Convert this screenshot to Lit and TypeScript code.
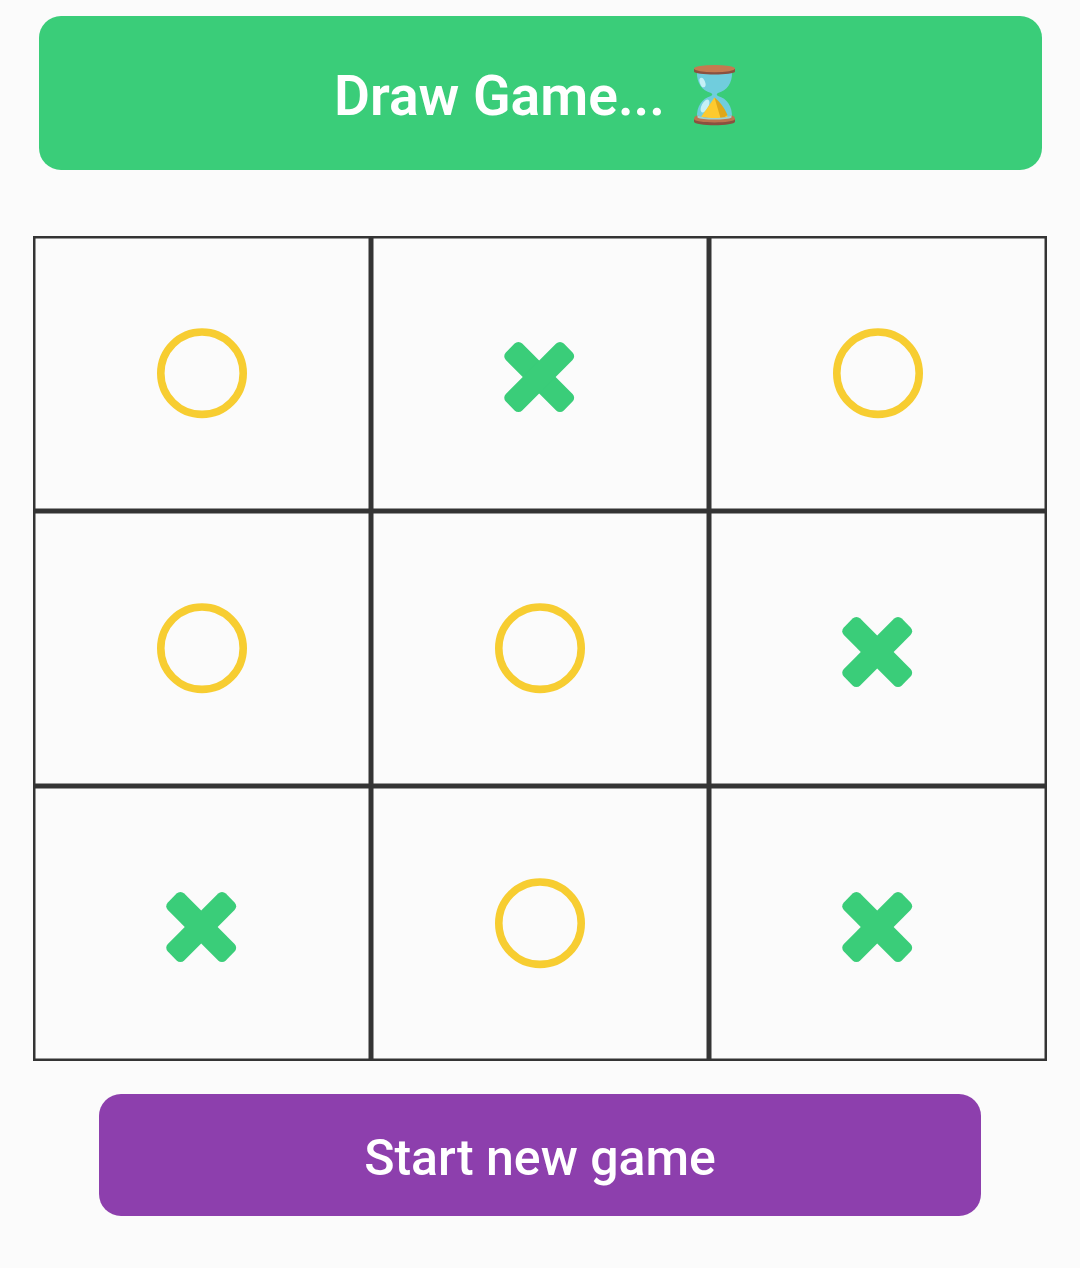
import { LitElement, html, svg, css } from "lit";
import { customElement, state } from "lit/decorators.js";

type Mark = "circle" | "cross";

const COLS = 3;
const CELL_W = 338;
const CELL_H = 275;
const EDGE = 2.5;

@customElement("app-root")
export class AppRoot extends LitElement {
  @state() private marks: Mark[] = [
    "circle", "cross", "circle",
    "circle", "circle", "cross",
    "cross", "circle", "cross",
  ];

  static styles = css`
    :host {
      display: flex;
      flex-direction: column;
      box-sizing: border-box;
      width: 1080px;
      height: 1268px;
      padding: 16px 33px 0;
      background: #fbfbfb;
      font-family: Roboto, "Liberation Sans", sans-serif;
      font-weight: 500;
      color: #fff;
      overflow: hidden;
    }
    .banner {
      display: flex;
      align-items: center;
      justify-content: center;
      box-sizing: border-box;
      height: 154px;
      margin: 0 5px 0 6px;
      padding: 5px 11px 0 0;
      border-radius: 22px;
      background: #3acd79;
      font-size: 55.2px;
      font-weight: 600;
      line-height: 64px;
      white-space: pre;
    }
    .glass {
      display: block;
      width: 43px;
      height: 62px;
      margin: 0 0 1px 28px;
    }
    .board {
      display: grid;
      grid-template-columns: repeat(3, 338px);
      grid-auto-rows: 275px;
      margin-top: 66px;
    }
    .cell {
      display: block;
      width: 338px;
      height: 275px;
    }
    .edge {
      fill: none;
      stroke: #343434;
    }
    .circle {
      fill: none;
      stroke: #f7cd31;
      stroke-width: 7.6;
    }
    .cross {
      fill: #3acd79;
    }
    .restart {
      height: 122px;
      margin: 33px 66px 0;
      padding: 6px 0 0;
      border: 0;
      border-radius: 22px;
      background: #8d3fad;
      color: inherit;
      font: inherit;
      font-size: 50px;
      line-height: 58px;
    }
  `;

  private renderMark(mark: Mark) {
    return mark === "circle"
      ? svg`<circle class="circle" cx="169" cy="137.2" r="41.2" />`
      : svg`<g class="cross" transform="translate(168.2 141)">
          <rect x="-41" y="-11.6" width="82" height="23.2" rx="5.4" transform="rotate(45)" />
          <rect x="-41" y="-11.6" width="82" height="23.2" rx="5.4" transform="rotate(-45)" />
        </g>`;
  }

  private renderCell(mark: Mark, index: number) {
    return html`<svg class="cell" viewBox="0 0 ${CELL_W} ${CELL_H}" aria-label="${mark} ${Math.floor(index / COLS) + 1}-${(index % COLS) + 1}">
      <rect class="edge" stroke-width=${EDGE} x=${EDGE / 2} y=${EDGE / 2}
        width=${CELL_W - EDGE} height=${CELL_H - EDGE} />
      ${this.renderMark(mark)}
    </svg>`;
  }

  render() {
    return html`
      <div class="banner">
        <span>Draw Game...</span>
        <svg class="glass" viewBox="0 0 43 62">
          <path d="M4 8H39C39.500 19 34 26.500 25 29Q22.500 30.500 25 32C34 34.500 39.500 42 39 54H4C3.500 42 9 34.500 18 32Q20.500 30.500 18 29C9 26.500 3.500 19 4 8Z" fill="#70cddd" />
          <ellipse cx="9.5" cy="18.5" rx="2.6" ry="5" transform="rotate(-20 9.500 18.500)" fill="#c5f0f6" />
          <ellipse cx="12" cy="42" rx="3.4" ry="7" transform="rotate(28 12 42)" fill="#c5f0f6" />
          <path d="M21.500 33.500L8 53Q22 56.500 35 53Z" fill="#fdca2f" />
          <path d="M21.500 33.500C27 38 31 43 34.500 51Q32 53.500 27.500 54Z" fill="#dfa719" />
          <path d="M1 5V7.500C1 11.500 42 11.500 42 7.500V5Z" fill="#8a5140" />
          <ellipse cx="21.500" cy="4.600" rx="20.500" ry="3.600" fill="#c47a50" />
          <path d="M1 55V57.500C1 62.500 42 62.500 42 57.500V55Z" fill="#8a5140" />
          <path d="M1 55C1 52.500 3.500 51.500 5 51.500C8 55 35 55 38 51.500C39.500 51.500 42 52.500 42 55C42 59.500 1 59.500 1 55Z" fill="#bd744e" />
          <path d="M4.500 51C8 55 35 55 38.500 51V53.500C35 56.300 8 56.300 4.500 53.500Z" fill="#9ed3d1" />
        </svg>
      </div>
      <div class="board">${this.marks.map((m, i) => this.renderCell(m, i))}</div>
      <button class="restart">Start new game</button>
    `;
  }
}
